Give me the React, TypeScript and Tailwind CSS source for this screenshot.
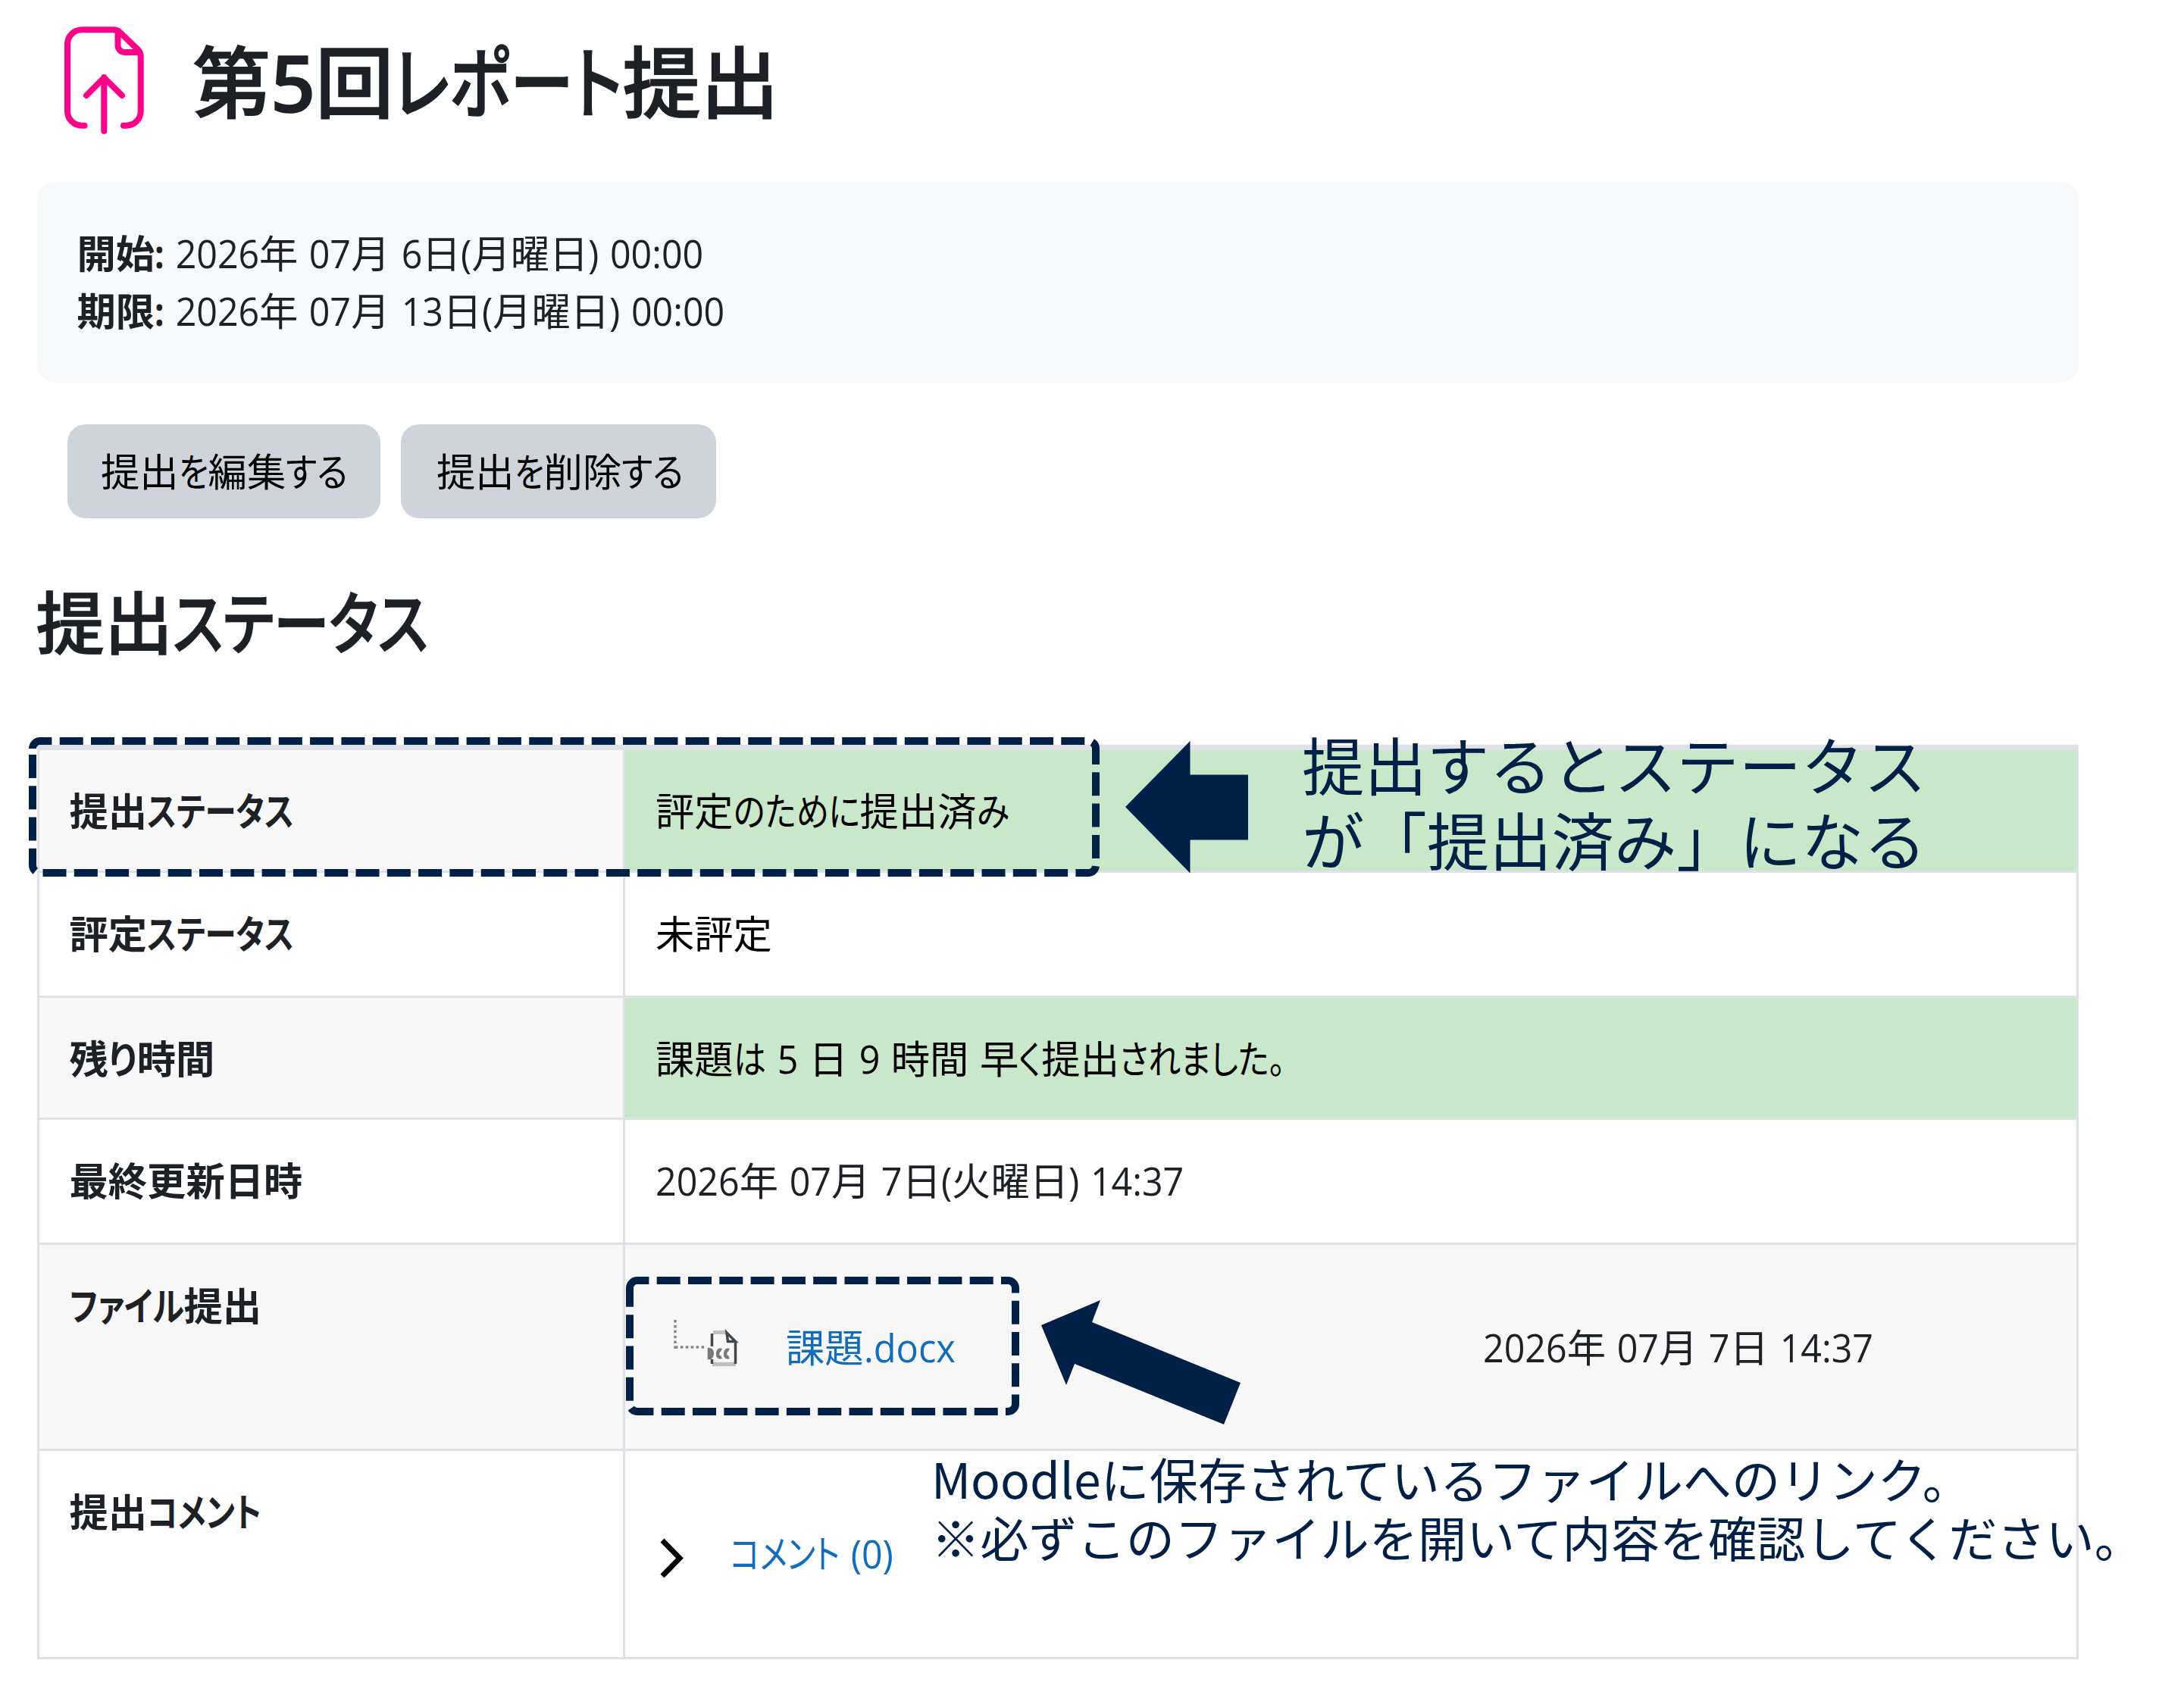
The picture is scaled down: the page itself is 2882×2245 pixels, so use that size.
import { useLayoutEffect, useRef, useState } from "react";
import type { ReactNode } from "react";

const RUNS = /[\u3040-\u30ff。]+|[\x20-\x7e]+|[^\u3040-\u30ff。\x20-\x7e]+/g;

// Squeezes a run of text to a given width (or by a ratio of its own width)
function Run({ text, width, ratio = 1, className = "" }: { text: string; width?: number; ratio?: number; className?: string }) {
  const ref = useRef<HTMLSpanElement>(null);
  const [natural, setNatural] = useState(0);

  useLayoutEffect(() => {
    if (ref.current) setNatural(ref.current.getBoundingClientRect().width);
  }, []);

  const target = width ?? natural * ratio;
  const scale = natural ? target / natural : 1;

  return (
    <span className={`inline-block whitespace-pre ${className}`} style={{ width: natural ? target : undefined }}>
      <span ref={ref} className="inline-block origin-left whitespace-pre" style={{ transform: natural ? `scaleX(${scale})` : undefined }}>
        {text}
      </span>
    </span>
  );
}

// UI text with narrow kana and latin, full width kanji
function UiText({ children, kana = [], latin = 0.943, latinClass = "" }: { children: string; kana?: number[]; latin?: number; latinClass?: string }) {
  let k = 0;
  return (
    <span className="whitespace-pre [font-feature-settings:'palt'] [word-spacing:2.2px]">
      {(children.match(RUNS) ?? []).map((run, i) => {
        if (/[\u3040-\u30ff]/.test(run)) return <Run key={i} text={run} width={kana[k++]} ratio={0.83} />;
        if (/[\x20-\x7e]/.test(run)) return <Run key={i} text={run} ratio={latin} className={latinClass} />;
        return <span key={i}>{run}</span>;
      })}
    </span>
  );
}

function SubmitIcon() {
  return (
    <svg width="160" height="170" viewBox="0 0 160 170" fill="none" stroke="#ff0088" strokeWidth="8" strokeLinecap="round" strokeLinejoin="round">
      <path d="M41.5 145.7H38A19 19 0 0 1 19 126.7V38.3A19 19 0 0 1 38 19.3H80C84 19.3 86 20.5 89 23.3L111 44.5C114.5 48 115.7 50 115.7 54V126.7A19 19 0 0 1 96.7 145.7H93" />
      <path d="M85.5 22V40A9 9 0 0 0 94.5 49H114" />
      <path d="M67.3 153V82M44 106L67.3 82.5L91 106" />
    </svg>
  );
}

function DocIcon() {
  return (
    <svg width="110" height="90" viewBox="0 0 110 90" fill="none">
      <path d="M12 13V51M12 49H50" stroke="#858585" strokeWidth="3.5" strokeDasharray="3.5 3.4" />
      <path d="M62 29.5H80" stroke="#bfbfbf" strokeWidth="5" />
      <path d="M61 71.5H92" stroke="#bfbfbf" strokeWidth="5.5" />
      <path d="M60.5 31V48M60.5 65V71M91.5 42V71" stroke="#44484c" strokeWidth="3.5" />
      <path d="M80 30L91.5 41.5H81.5Z" stroke="#44484c" strokeWidth="3.5" />
      <path d="M57 52V63C62 63 62 52 57 52ZM73 53C67 50 66 65 73 62M83 53C77 50 76 65 83 62" stroke="#77797c" strokeWidth="4.5" />
    </svg>
  );
}

function Row({ label, kana, height, striped, green, children }: { label: string; kana?: number[]; height: string; striped?: boolean; green?: boolean; children: ReactNode }) {
  return (
    <div className={`flex border-b-[3px] border-[#dee2e6] ${height} ${striped ? "bg-[#f7f7f7]" : "bg-white"}`}>
      <div className="w-[773px] shrink-0 border-r-[3px] border-[#dee2e6] pt-[42px] pl-[39.5px] font-bold">
        <UiText kana={kana}>{label}</UiText>
      </div>
      <div className={`flex-1 pl-[40px] ${green ? "bg-[#c9e8c9] text-black" : ""}`}>{children}</div>
    </div>
  );
}

export default function App() {
  return (
    <div className="relative h-[2245px] w-[2882px] overflow-hidden bg-white font-['Open_Sans','Noto_Sans_CJK_JP',sans-serif] text-[51.3px] leading-[76px] text-[#1d2125]" lang="ja">
      {/* Title */}
      <div className="flex h-[240px] pl-[70px]">
        <div className="w-[184px] shrink-0 pt-5">
          <SubmitIcon />
        </div>
        <h1 className="pt-[46px] text-[103.2px] leading-[124px] font-medium [-webkit-text-stroke:1.5px_#1d2125]">
          <UiText kana={[302]} latin={1} latinClass="font-semibold">第5回レポート提出</UiText>
        </h1>
      </div>

      {/* Dates */}
      <div className="ml-[49px] h-[265px] w-[2694px] rounded-[24px] bg-[#f8f9fa] pt-[56px] pl-[52.5px]">
        <p><b><UiText latin={0.86}>開始:</UiText></b><UiText> 2026年 07月 6日(月曜日) 00:00</UiText></p>
        <p><b><UiText latin={0.86}>期限:</UiText></b><UiText> 2026年 07月 13日(月曜日) 00:00</UiText></p>
      </div>

      {/* Actions */}
      <div className="mt-[55px] ml-[89px] flex gap-[27px] text-black">
        <button className="h-[124px] w-[413px] rounded-[24px] bg-[#ced4da] pl-[44px] text-left">
          <UiText kana={[39, 82]}>提出を編集する</UiText>
        </button>
        <button className="h-[124px] w-[416px] rounded-[24px] bg-[#ced4da] pl-[47px] text-left">
          <UiText kana={[39, 82]}>提出を削除する</UiText>
        </button>
      </div>

      <h2 className="mt-[83px] ml-[47.5px] h-[216px] text-[90.3px] leading-[108px] font-medium [-webkit-text-stroke:1.3px_#1d2125]">
        <UiText kana={[337]}>提出ステータス</UiText>
      </h2>

      {/* Status table */}
      <div className="ml-[49px] w-[2694px] border-x-[3px] border-t-[7px] border-[#dee2e6]">
        <Row label="提出ステータス" kana={[194]} height="h-[162px]" striped green>
          <div className="pt-[42px]"><UiText kana={[167, 43]}>評定のために提出済み</UiText></div>
        </Row>
        <Row label="評定ステータス" kana={[194]} height="h-[165px]">
          <div className="pt-[42px] text-black"><UiText>未評定</UiText></div>
        </Row>
        <Row label="残り時間" kana={[38]} height="h-[161px]" striped green>
          <div className="pt-[42px]"><UiText kana={[43, 30, 219]}>課題は 5 日 9 時間 早く提出されました。</UiText></div>
        </Row>
        <Row label="最終更新日時" height="h-[165px]">
          <div className="pt-[42px]"><UiText>2026年 07月 7日(火曜日) 14:37</UiText></div>
        </Row>
        <Row label="ファイル提出" kana={[151]} height="h-[272px]" striped>
          <div className="flex pt-[97px]">
            <div className="-mt-[11px] ml-[14px] w-[158px]">
              <DocIcon />
            </div>
            <a className="w-[920px] text-[#0f6cbf]"><UiText latin={0.95}>課題.docx</UiText></a>
            <span><UiText>2026年 07月 7日 14:37</UiText></span>
          </div>
        </Row>
        <Row label="提出コメント" kana={[151]} height="h-[275px]">
          <div className="flex pt-[97px]">
            <svg className="mt-[13px] ml-[3px]" width="95" height="60" viewBox="0 0 95 60" fill="none" stroke="#000000" strokeWidth="7">
              <path d="M6 8L29 31.5L6 55" />
            </svg>
            <a className="text-[#0f6cbf]"><UiText kana={[145]}>コメント (0)</UiText></a>
          </div>
        </Row>
      </div>

      {/* Annotations over the page */}
      <svg className="absolute top-0 left-0" width="2882" height="2245" viewBox="0 0 2882 2245" fill="none">
        <g stroke="#002048" strokeWidth="10" strokeDasharray="31 10.3">
          <path d="M43 988A10 10 0 0 1 53 978H1436A10 10 0 0 1 1446 988V1142A10 10 0 0 1 1436 1152H53A10 10 0 0 1 43 1142Z" />
          <path d="M831 1700A10 10 0 0 1 841 1690H1330A10 10 0 0 1 1340 1700V1853A10 10 0 0 1 1330 1863H841A10 10 0 0 1 831 1853Z" />
        </g>
        <g fill="#002048">
          <path d="M1485 1065L1570.5 978V1022.5H1647V1108.5H1570.5V1152.5Z" />
          <path d="M1374 1749L1452 1716L1441 1745L1637 1825L1615 1880L1418 1800L1407 1828Z" />
        </g>
      </svg>
      <p className="absolute top-[957.5px] left-[1718px] font-['Noto_Sans_CJK_JP',sans-serif] text-[82.4px] leading-[99px] whitespace-nowrap text-[#002048]">
        提出するとステータス<br />が「提出済み」になる
      </p>
      <p className="absolute top-[1912px] left-[1229px] font-['Noto_Sans_CJK_JP',sans-serif] text-[64.2px] leading-[77px] whitespace-nowrap text-[#002048]">
        Moodleに保存されているファイルへのリンク。<br />※必ずこのファイルを開いて内容を確認してください。
      </p>
    </div>
  );
}
